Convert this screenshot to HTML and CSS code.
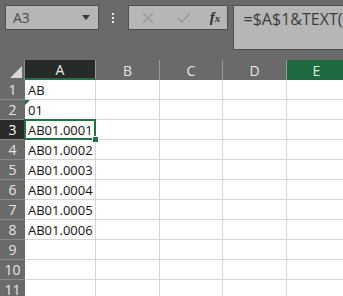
FILE: index.html
```html
<!DOCTYPE html>
<html>

<head>
    <link rel="stylesheet" href="styles.css">
</head>

<body>
    <div class="formula_bar">
        <div class="name_box">
            <span>A3</span>
            <svg class="drop" width="8" height="5" viewBox="0 0 8 5"><path d="M0 0h8L4 5z" fill="#3a3a3a"/></svg>
        </div>
        <div class="grip"><i></i><i></i><i></i></div>
        <div class="fx_buttons">
            <svg class="btn_cancel" width="14" height="14" viewBox="0 0 14 14"><path d="M2 2l10 10M12 2L2 12" stroke="#9c9c9c" stroke-width="1.6"/></svg>
            <svg class="btn_enter" width="16" height="14" viewBox="0 0 16 14"><path d="M2 7l4 4 8-9" stroke="#9c9c9c" stroke-width="1.6" fill="none"/></svg>
            <span class="fx">f<sub>x</sub></span>
        </div>
        <div class="formula_input">=$A$1&amp;TEXT(ROW()-2,"0000")</div>
    </div>

    <div class="sheet">
        <div class="corner"><svg width="12" height="12" viewBox="0 0 12 12"><path d="M12 0v12H0z" fill="#d8d8d8"/></svg></div>
        <div class="col_head active">A</div>
        <div class="col_head">B</div>
        <div class="col_head">C</div>
        <div class="col_head">D</div>
        <div class="col_head green">E</div>

        <div class="row_head">1</div>
        <div class="cell">AB</div><div class="cell"></div><div class="cell"></div><div class="cell"></div><div class="cell"></div>

        <div class="row_head">2</div>
        <div class="cell note">01</div><div class="cell"></div><div class="cell"></div><div class="cell"></div><div class="cell"></div>

        <div class="row_head active">3</div>
        <div class="cell selected">AB01.0001<span class="handle"></span></div><div class="cell"></div><div class="cell"></div><div class="cell"></div><div class="cell"></div>

        <div class="row_head">4</div>
        <div class="cell">AB01.0002</div><div class="cell"></div><div class="cell"></div><div class="cell"></div><div class="cell"></div>

        <div class="row_head">5</div>
        <div class="cell">AB01.0003</div><div class="cell"></div><div class="cell"></div><div class="cell"></div><div class="cell"></div>

        <div class="row_head">6</div>
        <div class="cell">AB01.0004</div><div class="cell"></div><div class="cell"></div><div class="cell"></div><div class="cell"></div>

        <div class="row_head">7</div>
        <div class="cell">AB01.0005</div><div class="cell"></div><div class="cell"></div><div class="cell"></div><div class="cell"></div>

        <div class="row_head">8</div>
        <div class="cell">AB01.0006</div><div class="cell"></div><div class="cell"></div><div class="cell"></div><div class="cell"></div>

        <div class="row_head">9</div>
        <div class="cell"></div><div class="cell"></div><div class="cell"></div><div class="cell"></div><div class="cell"></div>

        <div class="row_head">10</div>
        <div class="cell"></div><div class="cell"></div><div class="cell"></div><div class="cell"></div><div class="cell"></div>

        <div class="row_head">11</div>
        <div class="cell"></div><div class="cell"></div><div class="cell"></div><div class="cell"></div><div class="cell"></div>
    </div>
</body>

</html>
```

FILE: styles.css
```css
html,
body {
    margin: 0;
    padding: 0;
    width: 343px;
    height: 296px;
    overflow: hidden;
    background: #6a6a6a;
    font-family: 'Open Sans', 'Noto Sans', sans-serif;
}

.formula_bar {
    display: flex;
    align-items: flex-start;
    height: 60px;
    padding: 5px 0 0 5px;
    box-sizing: border-box;
    white-space: nowrap;
}

.name_box {
    display: flex;
    align-items: center;
    justify-content: space-between;
    width: 101px;
    height: 25px;
    box-sizing: border-box;
    padding: 0 8px 0 7px;
    background: #b6b6b6;
    border: 1px solid #4e4e4e;
    color: #4a4a4a;
    font-size: 14px;
}

.grip {
    display: flex;
    flex-direction: column;
    align-items: center;
    gap: 2px;
    width: 32px;
    padding-top: 8px;
}

.grip i {
    display: block;
    width: 2px;
    height: 2px;
    background: #e8e8e8;
}

.fx_buttons {
    display: flex;
    align-items: center;
    width: 108px;
    height: 25px;
    box-sizing: border-box;
    padding-left: 12px;
    background: #b6b6b6;
    border: 1px solid #4e4e4e;
}

.btn_enter {
    margin-left: 21px;
}

.fx {
    margin-left: 18px;
    font-family: 'Liberation Serif', serif;
    font-style: italic;
    font-weight: bold;
    font-size: 15px;
    color: #303030;
}

.fx sub {
    font-size: 11px;
    vertical-align: 0;
}

.formula_input {
    width: 120px;
    height: 45px;
    margin-left: 5px;
    box-sizing: border-box;
    padding: 2px 0 0 10px;
    background: #b6b6b6;
    border: 1px solid #4e4e4e;
    border-right: 0;
    color: #3c3c3c;
    font-size: 16px;
    overflow: hidden;
}

.sheet {
    display: grid;
    grid-template-columns: 25px 71px 64px 63px 64px 60px;
    grid-auto-rows: 20px;
    background: #fff;
}

.corner,
.col_head,
.row_head {
    background: #6a6a6a;
    color: #e6e6e6;
    font-size: 14px;
    display: flex;
    align-items: center;
    justify-content: center;
}

.corner {
    align-items: flex-end;
    justify-content: flex-end;
    padding: 0 2px 2px 0;
    border-right: 1px solid #8a8a8a;
}

.col_head {
    border-right: 1px solid #9a9a9a;
}

.col_head.active {
    background: #262a28;
    border-bottom: 2px solid #217346;
    box-sizing: border-box;
}

.col_head.green {
    background: #1f6b3f;
}

.row_head {
    border-bottom: 1px solid #8a8a8a;
    box-sizing: border-box;
}

.row_head.active {
    background: #2a2a2a;
    color: #fff;
}

.cell {
    position: relative;
    border-right: 1px solid #d6d6d6;
    border-bottom: 1px solid #d6d6d6;
    box-sizing: border-box;
    padding-left: 3px;
    font-size: 13px;
    line-height: 20px;
    color: #111;
}

.cell.note::before {
    content: "";
    position: absolute;
    left: 0;
    top: 0;
    border-top: 5px solid #217346;
    border-right: 5px solid transparent;
}

.cell.selected::after {
    content: "";
    position: absolute;
    left: -1px;
    top: -1px;
    right: -1px;
    bottom: -1px;
    border: 2px solid #217346;
    z-index: 1;
}

.handle {
    position: absolute;
    right: -4px;
    bottom: -4px;
    width: 5px;
    height: 5px;
    background: #217346;
    border: 1px solid #fff;
    z-index: 2;
}
```
